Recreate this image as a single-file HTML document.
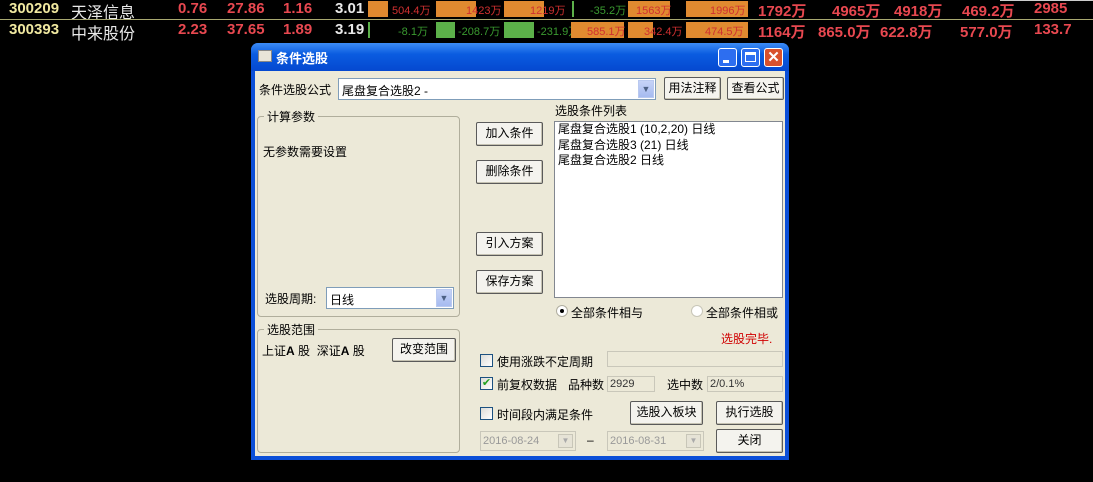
<!DOCTYPE html><html><head><meta charset="utf-8"><style>
body{margin:0;width:1093px;height:482px;background:#000;position:relative;overflow:hidden;font-family:"Liberation Sans","Noto Sans CJK SC",sans-serif;}
.a{position:absolute;white-space:nowrap}
.q{font-size:15px;font-weight:bold;color:#e84850;font-family:"Liberation Sans","Noto Sans CJK SC",sans-serif}
.w{color:#e8e8e8}
.bar{position:absolute;height:16px;background:#e08a30}
.g{position:absolute;height:16px;background:#5cb04a}
.s{font-size:11px;color:#d03030}
.sg{font-size:11px;color:#3a9a30}
.d{font-size:12px;color:#000;font-family:"Liberation Sans","Noto Sans CJK SC",sans-serif}
.btn{position:absolute;background:#f4f3ee;border:1px solid #5a5a5a;border-radius:2px;box-sizing:border-box;font-size:12px;text-align:center;line-height:21px;box-shadow:inset -1px -1px 0 #c5c2b2}
.grp{position:absolute;border:1px solid #b0ae9c;border-radius:4px;box-sizing:border-box}
.lbl{position:absolute;background:#ece9d8;padding:0 3px;font-size:12px}
.fld{position:absolute;background:#fff;border:1px solid #7f9db9;box-sizing:border-box}
.dd{position:absolute;top:1px;right:1px;width:16px;bottom:1px;background:linear-gradient(#c6d3f7,#a6bbf0);border:1px solid #b9c9f0;box-sizing:border-box;color:#4d6185;font-size:9px;text-align:center;line-height:16px}
.cb{position:absolute;width:13px;height:13px;border:1px solid #1c5180;background:linear-gradient(135deg,#dcdcd7,#fff);box-sizing:border-box;font-size:11px;line-height:11px;color:#21a121;text-align:center}
.ro{position:absolute;background:#ece9d8;border:1px solid #c9c7ba;box-sizing:border-box;font-size:11px;color:#333;line-height:14px;padding-left:2px}
</style></head><body>
<div class="a q" style="left:9px;top:0;color:#f0e8a0">300209</div>
<div class="a w" style="left:71px;top:-1px;font-size:16px">天泽信息</div>
<div class="a q" style="left:178px;top:0">0.76</div><div class="a q" style="left:227px;top:0">27.86</div><div class="a q" style="left:283px;top:0">1.16</div><div class="a q w" style="left:335px;top:0">3.01</div>
<div class="bar" style="left:368px;top:1px;width:20px"></div><div class="a s" style="left:392px;top:2px">504.4万</div>
<div class="bar" style="left:436px;top:1px;width:40px"></div><div class="a s" style="left:466px;top:2px">1423万</div>
<div class="bar" style="left:504px;top:1px;width:40px"></div><div class="a s" style="left:530px;top:2px">1219万</div>
<div class="g" style="left:572px;top:1px;width:2px"></div><div class="a sg" style="left:590px;top:2px">-35.2万</div>
<div class="bar" style="left:628px;top:1px;width:42px"></div><div class="a s" style="left:636px;top:2px">1563万</div>
<div class="bar" style="left:686px;top:1px;width:62px"></div><div class="a s" style="left:710px;top:2px">1996万</div>
<div class="a q" style="left:758px;top:0">1792万</div><div class="a q" style="left:832px;top:0">4965万</div><div class="a q" style="left:894px;top:0">4918万</div><div class="a q" style="left:962px;top:0">469.2万</div><div class="a q" style="left:1034px;top:0">2985</div>
<div class="a" style="left:1000px;top:0;width:93px;height:1px;background:#ccc"></div>
<div class="a" style="left:0;top:19px;width:1093px;height:1px;background:#a8a870"></div>
<div class="a q" style="left:9px;top:21px;color:#f0e8a0">300393</div>
<div class="a w" style="left:71px;top:20px;font-size:16px">中来股份</div>
<div class="a q" style="left:178px;top:21px">2.23</div><div class="a q" style="left:227px;top:21px">37.65</div><div class="a q" style="left:283px;top:21px">1.89</div><div class="a q w" style="left:335px;top:21px">3.19</div>
<div class="g" style="left:368px;top:22px;width:2px"></div><div class="a sg" style="left:398px;top:23px">-8.1万</div>
<div class="g" style="left:436px;top:22px;width:19px"></div><div class="a sg" style="left:458px;top:23px">-208.7万</div>
<div class="g" style="left:504px;top:22px;width:30px"></div><div class="a sg" style="left:537px;top:23px">-231.9万</div>
<div class="bar" style="left:571px;top:22px;width:53px"></div><div class="a s" style="left:587px;top:23px">585.1万</div>
<div class="bar" style="left:628px;top:22px;width:25px"></div><div class="a s" style="left:644px;top:23px">342.4万</div>
<div class="bar" style="left:686px;top:22px;width:62px"></div><div class="a s" style="left:705px;top:23px">474.5万</div>
<div class="a q" style="left:758px;top:21px">1164万</div><div class="a q" style="left:818px;top:21px">865.0万</div><div class="a q" style="left:880px;top:21px">622.8万</div><div class="a q" style="left:960px;top:21px">577.0万</div><div class="a q" style="left:1034px;top:21px">133.7</div>

<div class="a" style="left:251px;top:43px;width:538px;height:417px;background:#0b4fd8;border-radius:7px 7px 0 0"></div>
<div class="a" style="left:251px;top:43px;width:538px;height:28px;background:linear-gradient(#3d8cf5,#0a5ce0 40%,#0548d0);border-radius:7px 7px 0 0"></div>
<div class="a" style="left:258px;top:50px;width:14px;height:12px;background:#e8e4d8;border:1px solid #888;box-sizing:border-box"></div>
<div class="a" style="left:276px;top:48px;color:#fff;font-size:13px;font-weight:bold">条件选股</div>
<div class="a" style="left:718px;top:48px;width:19px;height:19px;border:1px solid #fff;border-radius:3px;background:#2d6ef0;box-sizing:border-box"><div style="position:absolute;left:4px;top:11px;width:6px;height:3px;background:#fff"></div></div>
<div class="a" style="left:741px;top:48px;width:19px;height:19px;border:1px solid #fff;border-radius:3px;background:#2d6ef0;box-sizing:border-box"><div style="position:absolute;left:3px;top:3px;width:11px;height:10px;border:1px solid #fff;border-top-width:3px;box-sizing:border-box"></div></div>
<div class="a" style="left:764px;top:48px;width:19px;height:19px;border:1px solid #fff;border-radius:3px;background:#d9512c;box-sizing:border-box;color:#fff;font-size:15px;line-height:17px;text-align:center;font-weight:bold">✕</div>
<div class="a" style="left:255px;top:71px;width:530px;height:385px;background:#ece9d8"></div>

<div class="a d" style="left:259px;top:81px">条件选股公式</div>
<div class="fld" style="left:338px;top:78px;width:318px;height:22px"><span class="a d" style="left:3px;top:3px">尾盘复合选股2 -</span><div class="dd">▼</div></div>
<div class="btn" style="left:664px;top:77px;width:57px;height:23px">用法注释</div>
<div class="btn" style="left:727px;top:77px;width:57px;height:23px">查看公式</div>

<div class="grp" style="left:257px;top:116px;width:203px;height:201px"></div>
<div class="lbl" style="left:264px;top:108px">计算参数</div>
<div class="a d" style="left:263px;top:143px">无参数需要设置</div>
<div class="a d" style="left:265px;top:290px">选股周期:</div>
<div class="fld" style="left:326px;top:287px;width:128px;height:22px"><span class="a d" style="left:3px;top:3px">日线</span><div class="dd">▼</div></div>

<div class="grp" style="left:257px;top:329px;width:203px;height:124px"></div>
<div class="lbl" style="left:264px;top:321px">选股范围</div>
<div class="a d" style="left:262px;top:342px">上证<b>A</b> 股&nbsp; 深证<b>A</b> 股</div>
<div class="btn" style="left:392px;top:338px;width:64px;height:24px">改变范围</div>

<div class="btn" style="left:476px;top:122px;width:67px;height:24px">加入条件</div>
<div class="btn" style="left:476px;top:160px;width:67px;height:24px">删除条件</div>
<div class="btn" style="left:476px;top:232px;width:67px;height:24px">引入方案</div>
<div class="btn" style="left:476px;top:270px;width:67px;height:24px">保存方案</div>

<div class="a d" style="left:555px;top:102px">选股条件列表</div>
<div class="fld" style="left:554px;top:121px;width:229px;height:177px;border-color:#828790"></div>
<div class="a d" style="left:558px;top:122px;line-height:15.5px">尾盘复合选股1 (10,2,20) 日线<br>尾盘复合选股3 (21) 日线<br>尾盘复合选股2 日线</div>

<div class="a" style="left:556px;top:305px;width:12px;height:12px;border-radius:50%;background:#fff;border:1px solid #b0aea0;box-sizing:border-box"><div style="position:absolute;left:3px;top:3px;width:4px;height:4px;border-radius:50%;background:#000"></div></div>
<div class="a d" style="left:571px;top:304px">全部条件相与</div>
<div class="a" style="left:691px;top:305px;width:12px;height:12px;border-radius:50%;background:#fff;border:1px solid #c8c6b8;box-sizing:border-box"></div>
<div class="a d" style="left:706px;top:304px">全部条件相或</div>
<div class="a d" style="left:721px;top:330px;color:#d00000">选股完毕.</div>

<div class="cb" style="left:480px;top:354px"></div>
<div class="a d" style="left:497px;top:353px">使用涨跌不定周期</div>
<div class="ro" style="left:607px;top:351px;width:176px;height:16px"></div>
<div class="cb" style="left:480px;top:377px">✔</div>
<div class="a d" style="left:497px;top:376px">前复权数据</div>
<div class="a d" style="left:568px;top:376px">品种数</div>
<div class="ro" style="left:607px;top:376px;width:48px;height:16px">2929</div>
<div class="a d" style="left:667px;top:376px">选中数</div>
<div class="ro" style="left:707px;top:376px;width:76px;height:16px">2/0.1%</div>
<div class="cb" style="left:480px;top:407px"></div>
<div class="a d" style="left:497px;top:406px">时间段内满足条件</div>
<div class="btn" style="left:630px;top:401px;width:73px;height:24px">选股入板块</div>
<div class="btn" style="left:716px;top:401px;width:67px;height:24px">执行选股</div>
<div class="btn" style="left:716px;top:429px;width:67px;height:24px">关闭</div>
<div class="ro" style="left:480px;top:431px;width:96px;height:20px;line-height:18px;color:#999">2016-08-24<div class="a" style="right:2px;top:2px;width:15px;height:14px;background:#e6e3d6;border:1px solid #c8c6b8;box-sizing:border-box;font-size:8px;text-align:center;line-height:12px;color:#aaa">▼</div></div>
<div class="a d" style="left:587px;top:433px">–</div>
<div class="ro" style="left:607px;top:431px;width:97px;height:20px;line-height:18px;color:#999">2016-08-31<div class="a" style="right:2px;top:2px;width:15px;height:14px;background:#e6e3d6;border:1px solid #c8c6b8;box-sizing:border-box;font-size:8px;text-align:center;line-height:12px;color:#aaa">▼</div></div>
</body></html>
